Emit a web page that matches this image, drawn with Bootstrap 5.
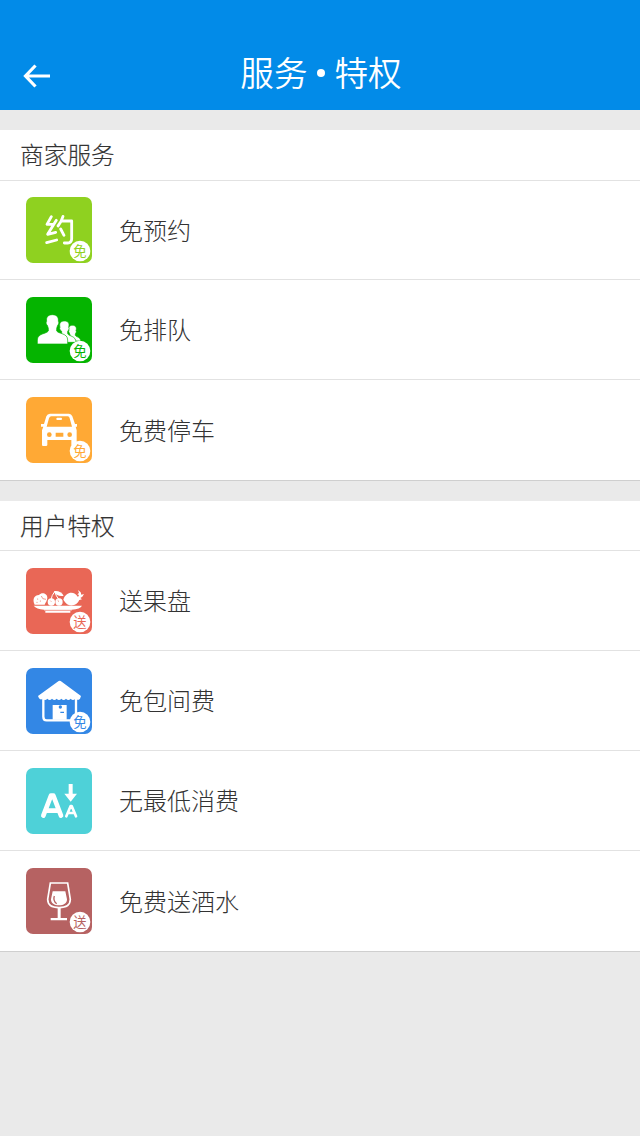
<!DOCTYPE html>
<html lang="zh-CN">
<head>
<meta charset="utf-8">
<meta name="viewport" content="width=device-width, initial-scale=1">
<title>服务 • 特权</title>
<link href="https://cdn.jsdelivr.net/npm/bootstrap@5.3.0/dist/css/bootstrap.min.css" rel="stylesheet">
<style>
body{background:#eaeaea;color:#333;font-family:"Noto Sans CJK SC Light","Noto Sans CJK SC",sans-serif;font-weight:300;font-size:24px;line-height:36px}
.topbar{height:110px;background:#028be8;padding:36px 0 0;color:#fff}
.topbar h1{font-family:"Noto Sans CJK SC DemiLight","Noto Sans CJK SC",sans-serif;font-size:33.6px;font-weight:350;line-height:74px;padding:0 0 2px 2px}
.dot{width:8px;height:8px;margin:2px 10px 0 9px}
.back{width:28px;margin-left:23px;margin-top:5px}
.side{width:51px}
.panel{background:#fff;border-bottom:1px solid #cfcfcf;margin-top:20px}
.panel h2{font-size:23.7px;font-weight:300;-webkit-text-stroke:.15px #333;line-height:36px;height:50px;padding:6px 20px;border-bottom:1px solid #e2e2e2}
.panel .list-group-item{height:100px;padding:0 26px;background:#fff;color:#333;border-color:#e2e2e2;gap:27px}
.panel .list-group-item span{padding-bottom:1px}
.panel .list-group-item:last-child{border-bottom:0}
.panel.first h2{height:51px}
.panel.first .list-group-item:first-child{height:99px}
.tile{width:66px;height:66px;border-radius:7px;flex:none}
.tile text{font-family:"Noto Sans CJK SC",sans-serif;font-weight:400;font-size:40px;text-anchor:middle}
</style>
</head>
<body>
<header class="topbar d-flex align-items-center justify-content-between">
  <a href="#" class="side d-flex" aria-label="返回"><svg class="back" height="24" viewBox="0 0 28 24" fill="none" stroke="#fff" stroke-width="3.2"><path d="M12.5 1.5 2.5 12 12.5 22.5M2 12H27"/></svg></a>
  <h1 class="m-0 d-flex align-items-center"><span>服务</span><i class="dot rounded-circle bg-white"></i><span>特权</span></h1>
  <span class="side"></span>
</header>
<main>
<section class="panel first">
  <h2 class="m-0">商家服务</h2>
  <ul class="list-group list-group-flush">
    <li class="list-group-item d-flex align-items-center">
      <svg class="tile" style="background:#8fd120" viewBox="18 21 198 198"><g fill="none" stroke="#fff" stroke-width="8.5" stroke-linecap="round" stroke-linejoin="round"><path d="M94 80 81 103H98M109 91 83 133 107 127M80 158 110 150M129 79Q124 96 114 108M124 93H155V146Q155 158 143 159H133M122 117 132 136"/></g><circle cx="180" cy="183" r="31" fill="#fff"/><text x="180" y="198" fill="#8fd120">免</text></svg>
      <span>免预约</span></li>
    <li class="list-group-item d-flex align-items-center">
      <svg class="tile" style="background:#05b400" viewBox="18 21 198 198"><g fill="#fff" stroke="#05b400" stroke-width="2"><path d="M157 106C168 106 171 114 168 122 171 125 167 129 166 132V136C169 142 182 141 182 153H150V134C147 126 144 124 147 121 144 113 148 106 157 106Z"/><path d="M133 93C146 93 149 101 146 112 149 115 146 120 143 124V131C146 139 168 137 168 157H125V124C120 120 117 115 120 112 117 101 121 93 133 93Z"/><path d="M97 74C112 74 116 83 115 94 118 96 116 103 113 106L110 115V123C116 132 143 129 143 150V162H52V150C52 130 79 132 85 123V115L82 106C78 103 77 96 80 94 78 83 83 74 97 74Z"/></g><circle cx="180" cy="183" r="31" fill="#fff"/><text x="180" y="198" fill="#05b400">免</text></svg>
      <span>免排队</span></li>
    <li class="list-group-item d-flex align-items-center">
      <svg class="tile" style="background:#ffa935" viewBox="18 21 198 198"><path fill="#fff" fill-rule="evenodd" d="M90 71H147Q154 71 157 79L165 102H171V110H167L170 121V165Q170 168 166 168H158Q154 168 154 164V150H82V165Q82 168 78 168H69Q66 168 66 164V121L70 110H63V102H72L79 79Q82 71 90 71ZM94 79Q89 79 87 85L80 110H156L149 85Q148 79 143 79ZM107 128V140H130V128Z"/><rect x="109" y="83" width="17" height="7" rx="3" fill="#fff"/><circle cx="88" cy="134" r="7" fill="#ffa935"/><circle cx="149" cy="134" r="7" fill="#ffa935"/><circle cx="180" cy="183" r="31" fill="#fff"/><text x="180" y="198" fill="#ffa935">免</text></svg>
      <span>免费停车</span></li>
  </ul>
</section>
<section class="panel">
  <h2 class="m-0">用户特权</h2>
  <ul class="list-group list-group-flush">
    <li class="list-group-item d-flex align-items-center">
      <svg class="tile" style="background:#e96756" viewBox="18 24 198 198"><g fill="#fff"><path d="M41 137H186Q181 147 155 149V152H151V158H76V152H72V149Q49 147 41 137Z"/><path d="M44 134C36 118 43 105 57 105 66 95 82 101 82 113 81 124 77 126 74 134Z"/><circle cx="94" cy="126" r="11"/><circle cx="117" cy="126" r="11"/><path d="M102 94C113 91 126 98 131 107 119 110 108 105 104 98Z"/><path d="M130 119C138 94 163 92 174 111L177 105 172 103 177 99 174 90 182 97 184 104 192 102 187 110 181 114 186 118 178 120C170 140 143 144 130 119Z"/></g><path d="M93 119Q95 106 104 95 108 108 117 119" fill="none" stroke="#fff" stroke-width="3"/><g fill="none" stroke="#e96756" stroke-width="2"><path d="M72 151H155M64 108Q66 119 78 118M91 122 94 125M113 121 117 125"/></g><g fill="#e96756"><circle cx="53" cy="117" r="1.5"/><circle cx="61" cy="123" r="1.5"/><circle cx="51" cy="127" r="1.5"/></g><circle cx="180" cy="186" r="31" fill="#fff"/><text x="180" y="201" fill="#e96756">送</text></svg>
      <span>送果盘</span></li>
    <li class="list-group-item d-flex align-items-center">
      <svg class="tile" style="background:#3387e5" viewBox="18 24 198 198"><path fill="#fff" d="M116 63Q119 61 122 63L183 108 180 116Q173 123 166 116 159 124 152 116 145 124 138 116 131 124 124 116 117 124 110 116 103 124 96 116 89 124 82 116 75 124 68 116 62 121 57 115L54 108ZM98 135H140V179H98Z"/><path d="M70 114V170Q70 181 80 181H159Q168 181 168 170V114" fill="none" stroke="#fff" stroke-width="7"/><circle cx="121" cy="141" r="5" fill="#3387e5"/><path d="M121 157H132" stroke="#3387e5" stroke-width="4"/><circle cx="180" cy="186" r="31" fill="#fff"/><text x="180" y="201" fill="#3387e5">免</text></svg>
      <span>免包间费</span></li>
    <li class="list-group-item d-flex align-items-center">
      <svg class="tile" style="background:#4ed1d8" viewBox="18 24 198 198"><g fill="none" stroke="#fff" stroke-linecap="round" stroke-linejoin="round"><path stroke-width="14" d="M70 167 93 107H100L123 167M80 152H113"/><path stroke-width="8" d="M139 169 152 138H155L168 169M144 159H163"/></g><path fill="#fff" d="M146 72H158V101H171L152 125 133 101H146Z"/></svg>
      <span>无最低消费</span></li>
    <li class="list-group-item d-flex align-items-center">
      <svg class="tile" style="background:#b66262" viewBox="18 24 198 198"><path d="M91 69H143L151 118C151 135 138 143 117 143S83 135 83 118Z" fill="none" stroke="#fff" stroke-width="5"/><path fill="#fff" d="M98 94H136L141 118C141 131 131 136 117 136S93 131 93 118ZM113 142H122V174H141V181H92V174H113Z"/><path d="M103 108Q98 122 110 131" fill="none" stroke="#b66262" stroke-width="4"/><circle cx="180" cy="186" r="31" fill="#fff"/><text x="180" y="201" fill="#b66262">送</text></svg>
      <span>免费送酒水</span></li>
  </ul>
</section>
</main>
<script src="https://cdn.jsdelivr.net/npm/bootstrap@5.3.0/dist/js/bootstrap.bundle.min.js"></script>
</body>
</html>
